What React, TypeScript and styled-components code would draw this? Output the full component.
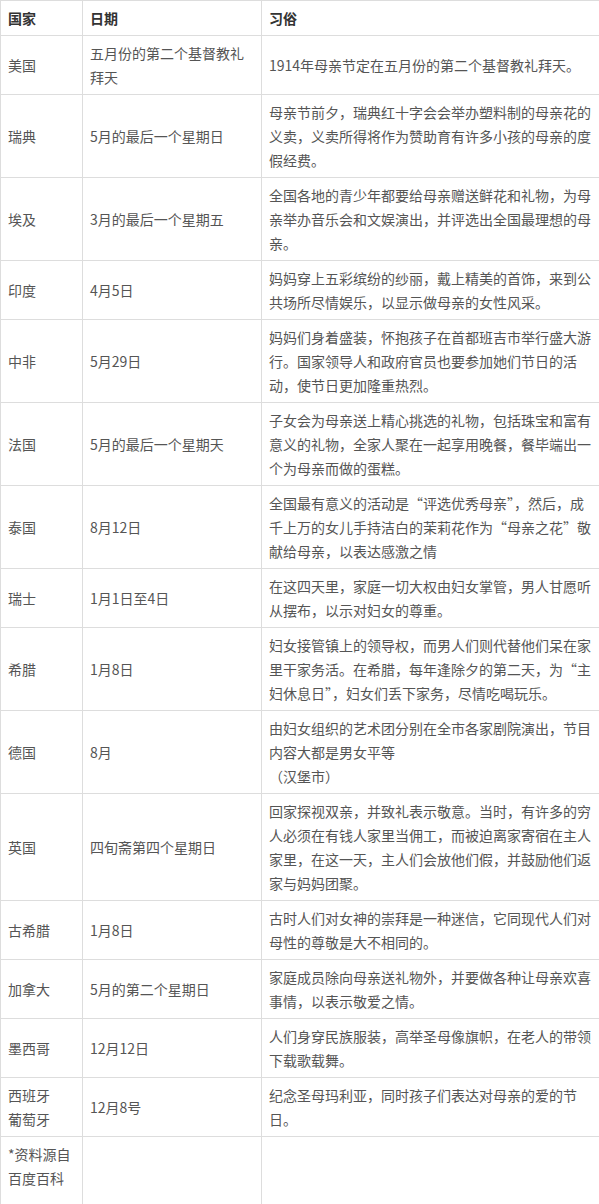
import React from "react";
import styled, { createGlobalStyle } from "styled-components";

const GlobalStyle = createGlobalStyle`
  html, body {
    margin: 0;
    padding: 0;
    background: #fff;
    overflow-x: hidden;
  }
  body {
    font-family: "Noto Sans CJK SC", "Liberation Sans", sans-serif;
  }
`;

// Styled Components
const Table = styled.table`
  width: 601px;
  border-collapse: collapse;
  table-layout: fixed;
  font-size: 14px;
  line-height: 24px;
  color: #555;
`;

const Col = styled.col<{ $w: number }>`
  width: ${(p) => p.$w}px;
`;

const HeadCell = styled.th`
  border: 1px solid #ddd;
  padding: 5px 7px;
  text-align: left;
  font-weight: bold;
  color: #333;
  vertical-align: middle;
`;

const Cell = styled.td<{ $tail?: boolean }>`
  border: 1px solid #ddd;
  padding: ${(p) => (p.$tail ? "5px 7px 20px" : "5px 7px")};
  vertical-align: ${(p) => (p.$tail ? "top" : "middle")};
  word-break: break-all;
`;

// data
const rows: [string, React.ReactNode, string, React.ReactNode][] = [
  ["us", "美国", "五月份的第二个基督教礼拜天", "1914年母亲节定在五月份的第二个基督教礼拜天。"],
  ["se", "瑞典", "5月的最后一个星期日", "母亲节前夕，瑞典红十字会会举办塑料制的母亲花的义卖，义卖所得将作为赞助育有许多小孩的母亲的度假经费。"],
  ["eg", "埃及", "3月的最后一个星期五", "全国各地的青少年都要给母亲赠送鲜花和礼物，为母亲举办音乐会和文娱演出，并评选出全国最理想的母亲。"],
  ["in", "印度", "4月5日", "妈妈穿上五彩缤纷的纱丽，戴上精美的首饰，来到公共场所尽情娱乐，以显示做母亲的女性风采。"],
  ["cf", "中非", "5月29日", "妈妈们身着盛装，怀抱孩子在首都班吉市举行盛大游行。国家领导人和政府官员也要参加她们节日的活动，使节日更加隆重热烈。"],
  ["fr", "法国", "5月的最后一个星期天", "子女会为母亲送上精心挑选的礼物，包括珠宝和富有意义的礼物，全家人聚在一起享用晚餐，餐毕端出一个为母亲而做的蛋糕。"],
  ["th", "泰国", "8月12日", "全国最有意义的活动是“评选优秀母亲”，然后，成千上万的女儿手持洁白的茉莉花作为“母亲之花”敬献给母亲，以表达感激之情"],
  ["ch", "瑞士", "1月1日至4日", "在这四天里，家庭一切大权由妇女掌管，男人甘愿听从摆布，以示对妇女的尊重。"],
  ["gr", "希腊", "1月8日", "妇女接管镇上的领导权，而男人们则代替他们呆在家里干家务活。在希腊，每年逢除夕的第二天，为“主妇休息日”，妇女们丢下家务，尽情吃喝玩乐。"],
  [
    "de",
    "德国",
    "8月",
    <>
      由妇女组织的艺术团分别在全市各家剧院演出，节目内容大都是男女平等
      <br />
      （汉堡市）
    </>,
  ],
  ["uk", "英国", "四旬斋第四个星期日", "回家探视双亲，并致礼表示敬意。当时，有许多的穷人必须在有钱人家里当佣工，而被迫离家寄宿在主人家里，在这一天，主人们会放他们假，并鼓励他们返家与妈妈团聚。"],
  ["agr", "古希腊", "1月8日", "古时人们对女神的崇拜是一种迷信，它同现代人们对母性的尊敬是大不相同的。"],
  ["ca", "加拿大", "5月的第二个星期日", "家庭成员除向母亲送礼物外，并要做各种让母亲欢喜事情，以表示敬爱之情。"],
  ["mx", "墨西哥", "12月12日", "人们身穿民族服装，高举圣母像旗帜，在老人的带领下载歌载舞。"],
  [
    "es",
    <>
      西班牙
      <br />
      葡萄牙
    </>,
    "12月8号",
    "纪念圣母玛利亚，同时孩子们表达对母亲的爱的节日。",
  ],
];

const App = () => {
  return (
    <>
      <GlobalStyle />
      <Table>
        <colgroup>
          <Col $w={82} />
          <Col $w={179} />
          <Col $w={340} />
        </colgroup>
        <thead>
          <tr>
            <HeadCell>国家</HeadCell>
            <HeadCell>日期</HeadCell>
            <HeadCell>习俗</HeadCell>
          </tr>
        </thead>
        <tbody>
          {rows.map(([key, country, date, custom]) => (
            <tr key={key}>
              <Cell>{country}</Cell>
              <Cell>{date}</Cell>
              <Cell>{custom}</Cell>
            </tr>
          ))}
          <tr>
            <Cell $tail>*资料源自百度百科</Cell>
            <Cell $tail></Cell>
            <Cell $tail></Cell>
          </tr>
        </tbody>
      </Table>
    </>
  );
};

export default App;
